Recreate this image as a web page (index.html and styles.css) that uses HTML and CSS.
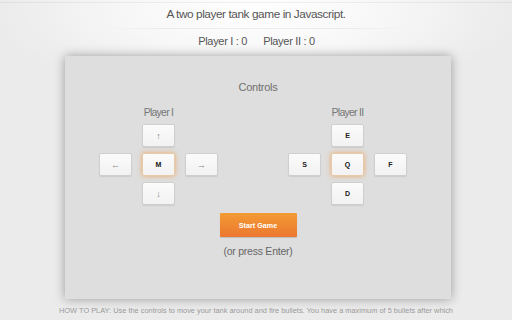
FILE: index.html
```html
<!DOCTYPE html>
<html>
<head>
<meta charset="utf-8">
<link rel="stylesheet" href="styles.css">
</head>
<body>
<div class="top-line"></div>
<h1 class="title">A two player tank game in Javascript.</h1>
<div class="mid-line"></div>
<div class="scores">
  <span>Player I : 0</span>
  <span>Player II : 0</span>
</div>
<div class="panel">
  <div class="controls-title">Controls</div>
  <div class="pads">
    <div class="player">
      <div class="player-name">Player I</div>
      <div class="pad">
        <div class="key k-up arrow">↑</div>
        <div class="key k-left arrow">←</div>
        <div class="key k-mid fire">M</div>
        <div class="key k-right arrow">→</div>
        <div class="key k-down arrow">↓</div>
      </div>
    </div>
    <div class="player">
      <div class="player-name">Player II</div>
      <div class="pad">
        <div class="key k-up">E</div>
        <div class="key k-left">S</div>
        <div class="key k-mid fire">Q</div>
        <div class="key k-right">F</div>
        <div class="key k-down">D</div>
      </div>
    </div>
  </div>
  <button class="start">Start Game</button>
  <div class="enter">(or press Enter)</div>
</div>
<p class="howto">HOW TO PLAY: Use the controls to move your tank around and fire bullets. You have a maximum of 5 bullets after which</p>
</body>
</html>
```
FILE: styles.css
```css
html, body {
  margin: 0;
  padding: 0;
  height: 100%;
  overflow: hidden;
}
body {
  font-family: "Liberation Sans", Arial, sans-serif;
  color: #555;
  background: #ebebeb;
  background-image: radial-gradient(ellipse 260px 90px at 50% 10px, #ffffff 0%, #f7f7f7 50%, rgba(235,235,235,0) 100%);
}
.top-line {
  height: 2px;
  border-bottom: 1px solid rgba(0,0,0,0.05);
}
.title {
  margin: 0;
  font-size: 11.8px;
  letter-spacing: -0.42px;
  font-weight: normal;
  text-align: center;
  line-height: 22px;
  color: #555;
  margin-top: 0;
}
.mid-line {
  width: 300px;
  height: 1px;
  margin: 3px auto 0;
  background: linear-gradient(to right, rgba(0,0,0,0), rgba(0,0,0,0.06) 20%, rgba(0,0,0,0.06) 80%, rgba(0,0,0,0));
}
.scores {
  display: flex;
  justify-content: center;
  gap: 16px;
  font-size: 11px;
  letter-spacing: -0.3px;
  line-height: 14px;
  margin-top: 5px;
  color: #555;
  padding-left: 1px;
}
.panel {
  width: 386px;
  height: 243px;
  margin: 8px 0 0 calc(50% - 191px);
  background: #dedede;
  box-shadow: 0 0 10px rgba(0,0,0,0.35);
  display: flex;
  flex-direction: column;
  align-items: center;
  box-sizing: border-box;
  padding-top: 24px;
}
.controls-title {
  font-size: 11px;
  letter-spacing: -0.25px;
  line-height: 14px;
  color: #6f6f6f;
}
.pads {
  display: flex;
  align-self: stretch;
  gap: 70px;
  padding-left: 34px;
  margin-top: 11px;
}
.player {
  display: flex;
  flex-direction: column;
  align-items: center;
}
.player-name {
  font-size: 10.5px;
  letter-spacing: -0.75px;
  line-height: 14px;
  color: #777;
  margin-bottom: 5px;
}
.pad {
  display: grid;
  grid-template-columns: 33px 33px 33px;
  grid-template-rows: 23px 23px 23px;
  column-gap: 10px;
  row-gap: 6px;
}
.key {
  background: linear-gradient(#fbfbfb, #f2f2f2);
  border: 1px solid #cfcfcf;
  border-radius: 2px;
  box-sizing: border-box;
  display: flex;
  align-items: center;
  justify-content: center;
  font-size: 7px;
  font-weight: bold;
  color: #222;
  box-shadow: 0 1px 1px rgba(0,0,0,0.08);
}
.arrow {
  font-weight: normal;
  font-size: 9px;
  color: #888;
}
.k-up { grid-column: 2; grid-row: 1; }
.k-left { grid-column: 1; grid-row: 2; }
.k-mid { grid-column: 2; grid-row: 2; }
.k-right { grid-column: 3; grid-row: 2; }
.k-down { grid-column: 2; grid-row: 3; }
.fire {
  color: #111;
  box-shadow: 0 0 5px rgba(240,150,60,0.7);
  border-color: #e8c9a8;
}
.start {
  margin-top: 8px;
  width: 77px;
  height: 24px;
  border: none;
  border-radius: 1px;
  background: linear-gradient(#f39b34, #ec7730);
  color: #fff;
  font-family: "Liberation Sans", Arial, sans-serif;
  font-weight: bold;
  font-size: 7.2px;
  padding: 0;
  box-shadow: 0 1px 1px rgba(0,0,0,0.15);
}
.enter {
  margin-top: 7px;
  font-size: 10.5px;
  letter-spacing: -0.25px;
  line-height: 14px;
  color: #666;
}
.howto {
  margin: 7px 0 0;
  text-align: center;
  font-size: 7.4px;
  line-height: 10px;
  color: #999;
}
```
